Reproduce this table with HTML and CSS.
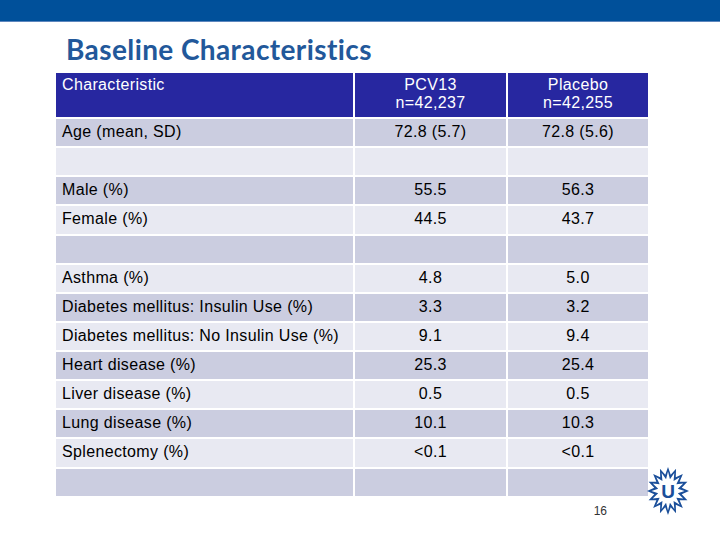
FILE: index.html
```html
<!DOCTYPE html>
<html lang="en">
<head>
<meta charset="utf-8">
<title>Baseline Characteristics</title>
<link rel="stylesheet" href="styles.css">
</head>
<body>
<div class="slide">
  <div class="topbar"></div>
  <h1 class="slide-title">Baseline Characteristics</h1>
  <div class="content">
    <div class="main-col">
      <table class="data-table">
        <colgroup>
          <col class="col-label">
          <col class="col-pcv">
          <col class="col-placebo">
        </colgroup>
        <thead>
          <tr class="head-row">
            <th class="label">Characteristic</th>
            <th>PCV13<br>n=42,237</th>
            <th>Placebo<br>n=42,255</th>
          </tr>
        </thead>
        <tbody>
          <tr class="dark"><td class="label">Age (mean, SD)</td><td>72.8 (5.7)</td><td>72.8 (5.6)</td></tr>
          <tr class="light"><td class="label"></td><td></td><td></td></tr>
          <tr class="dark"><td class="label">Male (%)</td><td>55.5</td><td>56.3</td></tr>
          <tr class="light"><td class="label">Female (%)</td><td>44.5</td><td>43.7</td></tr>
          <tr class="dark"><td class="label"></td><td></td><td></td></tr>
          <tr class="light"><td class="label">Asthma (%)</td><td>4.8</td><td>5.0</td></tr>
          <tr class="dark"><td class="label">Diabetes mellitus: Insulin Use (%)</td><td>3.3</td><td>3.2</td></tr>
          <tr class="light"><td class="label">Diabetes mellitus: No Insulin Use (%)</td><td>9.1</td><td>9.4</td></tr>
          <tr class="dark"><td class="label">Heart disease (%)</td><td>25.3</td><td>25.4</td></tr>
          <tr class="light"><td class="label">Liver disease (%)</td><td>0.5</td><td>0.5</td></tr>
          <tr class="dark"><td class="label">Lung disease (%)</td><td>10.1</td><td>10.3</td></tr>
          <tr class="light"><td class="label">Splenectomy (%)</td><td>&lt;0.1</td><td>&lt;0.1</td></tr>
          <tr class="dark"><td class="label"></td><td></td><td></td></tr>
        </tbody>
      </table>
      <div class="page-num">16</div>
    </div>
    <svg class="logo" width="46" height="52" viewBox="0 0 46 52" aria-label="Universiteit Utrecht logo">
      <path class="sun" fill-rule="evenodd" d="M23,2 L25.73,9.82 L31.04,3.83 L30.78,12.28 L37.85,9.03 L34.64,16.83 L42.4,16.82 L36.73,22.78 L44,26 L36.73,29.22 L42.4,35.18 L34.64,35.17 L37.85,42.97 L30.78,39.72 L31.04,48.17 L25.73,42.18 L23,50 L20.27,42.18 L14.96,48.17 L15.22,39.72 L8.15,42.97 L11.36,35.17 L3.6,35.18 L9.27,29.22 L2,26 L9.27,22.78 L3.6,16.82 L11.36,16.83 L8.15,9.03 L15.22,12.28 L14.96,3.83 L20.27,9.82 Z M23,6.5 L24.95,14.23 L29.31,7.98 L28.56,16.02 L34.67,12.21 L31.32,19.33 L38.24,18.54 L32.81,23.66 L39.5,26 L32.81,28.34 L38.24,33.46 L31.32,32.67 L34.67,39.79 L28.56,35.98 L29.31,44.02 L24.95,37.77 L23,45.5 L21.05,37.77 L16.69,44.02 L17.44,35.98 L11.33,39.79 L14.68,32.67 L7.76,33.46 L13.19,28.34 L6.5,26 L13.19,23.66 L7.76,18.54 L14.68,19.33 L11.33,12.21 L17.44,16.02 L16.69,7.98 L21.05,14.23 Z"/>
      <text class="logo-u" x="23" y="32.8" text-anchor="middle">U</text>
    </svg>
  </div>
</div>
</body>
</html>
```

FILE: styles.css
```css
html, body {
  margin: 0;
  padding: 0;
  background: #ffffff;
}

.slide {
  width: 720px;
  height: 540px;
  overflow: hidden;
  font-family: "Liberation Sans", Arial, sans-serif;
  color: #000;
}

.topbar {
  height: 21px;
  background: #00509a;
  border-bottom: 1px solid #5d86bd;
}

.slide-title {
  margin: 12.5px 0 0 66px;
  font-family: Lato, "Open Sans", sans-serif;
  font-weight: 700;
  font-size: 28px;
  line-height: 28px;
  color: #22589a;
  letter-spacing: 0.4px;
  font-variant-ligatures: none;
}

.content {
  display: flex;
  align-items: flex-end;
  margin-top: 8.5px;
  padding-left: 54px;
}

.main-col {
  display: flex;
  flex-direction: column;
  width: 596px;
}

.data-table {
  border-collapse: separate;
  border-spacing: 2px;
  table-layout: fixed;
  width: 596px;
  font-size: 16px;
  line-height: 18px;
  letter-spacing: 0.35px;
}

.col-label { width: 297px; }
.col-pcv { width: 151px; }
.col-placebo { width: 140px; }

.data-table th,
.data-table td {
  padding: 4px 6px 0;
  vertical-align: top;
  text-align: center;
  font-weight: normal;
  white-space: nowrap;
}

.data-table .label {
  text-align: left;
}

.head-row {
  height: 44px;
}

.head-row th {
  background: #2727a0;
  color: #ffffff;
  padding-top: 3px;
}

tbody tr {
  height: 27.14px;
}

tr.dark td {
  background: #cbcde0;
}

tr.light td {
  background: #e8e9f2;
}

.page-num {
  margin-top: 6.7px;
  padding-right: 43px;
  text-align: right;
  font-size: 12px;
  line-height: 14px;
  color: #333333;
}

.logo {
  display: block;
  margin-left: -5px;
  margin-bottom: 1.5px;
  flex: none;
}

.sun {
  fill: #1b4f9a;
}

.logo-u {
  font-family: "Liberation Sans", Arial, sans-serif;
  font-weight: 700;
  font-size: 19px;
  fill: #1b4f9a;
}
```
